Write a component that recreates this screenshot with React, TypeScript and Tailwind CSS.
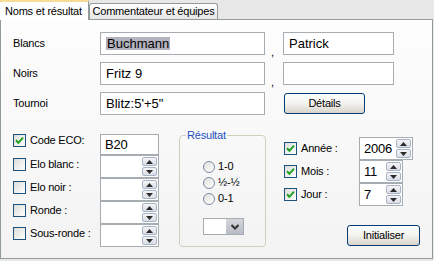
import type { ReactNode } from 'react'

function Check({ checked }: { checked?: boolean }) {
  return (
    <span className="flex h-[13px] w-[13px] shrink-0 items-center justify-center border border-[#1c5180] bg-gradient-to-br from-[#dcdcd7] to-white">
      {checked && (
        <svg width="9" height="9" viewBox="0 0 9 9">
          <path d="M1 4.2 L3.4 6.8 L8 1.6" stroke="#21a121" strokeWidth="2" fill="none" />
        </svg>
      )}
    </span>
  )
}

function Radio({ label }: { label: string }) {
  return (
    <div className="flex h-[13px] items-center gap-[3px]">
      <span className="h-[12px] w-[12px] rounded-full border border-[#7a8aa0] bg-gradient-to-br from-[#e0e0dc] to-white" />
      <span>{label}</span>
    </div>
  )
}

function SpinBtn({ up }: { up?: boolean }) {
  return (
    <span className="flex h-[9px] w-[15px] items-center justify-center rounded-[2px] border border-[#a9b3c6] bg-gradient-to-b from-[#f4f5f8] to-[#d9dde6]">
      <svg width="7" height="4" viewBox="0 0 7 4">
        <path d={up ? 'M0 4 L3.5 0 L7 4Z' : 'M0 0 L3.5 4 L7 0Z'} fill="#2b2b2b" />
      </svg>
    </span>
  )
}

function SpinBox({ value, w }: { value?: string; w: string }) {
  return (
    <div className={`flex h-[23px] ${w} shrink-0 items-center justify-between border border-[#a5acb2] bg-white pl-[4px] pr-[1px] text-[13px]`}>
      <span>{value}</span>
      <div className="flex flex-col gap-[1px]">
        <SpinBtn up />
        <SpinBtn />
      </div>
    </div>
  )
}

function Field({ children, w }: { children?: ReactNode; w: string }) {
  return (
    <div className={`flex h-[23px] ${w} items-center border border-[#a5acb2] bg-white pl-[5px] text-[13px] tracking-normal`}>
      {children}
    </div>
  )
}

function XpButton({ label, w }: { label: string; w: string }) {
  return (
    <div className={`flex h-[21px] ${w} items-center justify-center rounded-[3px] border border-[#003c74] bg-gradient-to-b from-white via-[#f2f2ee] to-[#d8d4cb]`}>
      {label}
    </div>
  )
}

const checkRows = ['Elo blanc :', 'Elo noir :', 'Ronde :', 'Sous-ronde :']

export default function App() {
  return (
    <div className="h-[261px] w-[434px] bg-[#e8e8e8] font-['Liberation_Sans',Arial,sans-serif] text-[11px] leading-[13px] tracking-[-0.2px] text-black">
      <div className="flex h-[19px] items-end">
        <div className="relative z-10 -mb-[1px] flex h-[20px] w-[89px] items-center border-r border-t-2 border-r-[#919b9c] border-t-[#f7dc98] bg-white pl-[5px]">
          Noms et résultat
        </div>
        <div className="flex h-[16px] w-[129px] items-center justify-center rounded-t-[3px] border border-b-0 border-[#919b9c] bg-gradient-to-b from-white to-[#e6e6e6]">
          Commentateur et équipes
        </div>
      </div>

      <div className="h-[240px] w-[433px] border border-[#919b9c] bg-gradient-to-b from-[#fdfdfd] to-[#f3f3f3] pl-[12px] pt-[12px]">
        <div className="grid grid-cols-[87px_165px_18px_111px] grid-rows-[23px_23px_23px] gap-y-[7px]">
          <div className="flex items-center">Blancs</div>
          <Field w="w-[165px]">
            <span className="bg-[#b3b3bd] px-[1px]">Buchmann</span>
          </Field>
          <div className="translate-y-[4px] self-end pl-[6px]">,</div>
          <Field w="w-[111px]">Patrick</Field>

          <div className="flex items-center">Noirs</div>
          <Field w="w-[165px]">Fritz 9</Field>
          <div className="translate-y-[4px] self-end pl-[6px]">,</div>
          <Field w="w-[111px]" />

          <div className="flex items-center">Tournoi</div>
          <Field w="w-[165px]">Blitz:5'+5"</Field>
          <div />
          <div className="pl-[1px] pt-[1px]">
            <XpButton label="Détails" w="w-[81px]" />
          </div>
        </div>

        <div className="mt-[14px] flex items-start">
          <div className="mt-[5px] flex w-[146px] flex-col">
            <div className="flex h-[21px] items-start">
              <div className="flex w-[87px] items-center gap-[4px]">
                <Check checked />
                <span>Code ECO:</span>
              </div>
              <div className="flex h-[21px] w-[59px] items-center border border-[#a5acb2] bg-white pl-[4px] text-[13px]">
                B20
              </div>
            </div>
            {checkRows.map((label) => (
              <div key={label} className="flex h-[23px] items-start">
                <div className="mt-[3px] flex w-[87px] items-center gap-[4px]">
                  <Check />
                  <span>{label}</span>
                </div>
                <SpinBox w="w-[59px]" />
              </div>
            ))}
          </div>

          <div className="ml-[20px] mt-[6px] flex h-[112px] w-[87px] flex-col rounded-[4px] border border-[#d0d0bf]">
            <span className="-mt-[7px] ml-[6px] w-fit bg-[#f9f9f9] px-[1px] text-[#1f4fc0]">Résultat</span>
            <div className="ml-[23px] mt-[18px] flex flex-col gap-[3px]">
              <Radio label="1-0" />
              <Radio label="½-½" />
              <Radio label="0-1" />
            </div>
            <div className="ml-[23px] mt-[13px] flex h-[17px] w-[41px] border border-[#a5acb2] bg-white">
              <div className="flex-1" />
              <div className="flex w-[17px] items-center justify-center bg-gradient-to-b from-[#d4d6dc] to-[#b9bcc6]">
                <svg width="8" height="6" viewBox="0 0 8 6">
                  <path d="M0.5 1 L4 4.5 L7.5 1" stroke="#333" strokeWidth="2" fill="none" />
                </svg>
              </div>
            </div>
          </div>

          <div className="ml-[18px] mt-[8px] flex w-[136px] flex-col">
            {[
              ['Année :', '2006', 'w-[54px]'],
              ['Mois :', '11', 'w-[44px]'],
              ['Jour :', '7', 'w-[44px]'],
            ].map(([label, value, w]) => (
              <div key={label} className="flex h-[23px] items-center">
                <div className="flex w-[75px] items-center gap-[4px]">
                  <Check checked />
                  <span>{label}</span>
                </div>
                <SpinBox value={value} w={w} />
              </div>
            ))}
            <div className="ml-[63px] mt-[19px]">
              <XpButton label="Initialiser" w="w-[73px]" />
            </div>
          </div>
        </div>
      </div>
    </div>
  )
}
